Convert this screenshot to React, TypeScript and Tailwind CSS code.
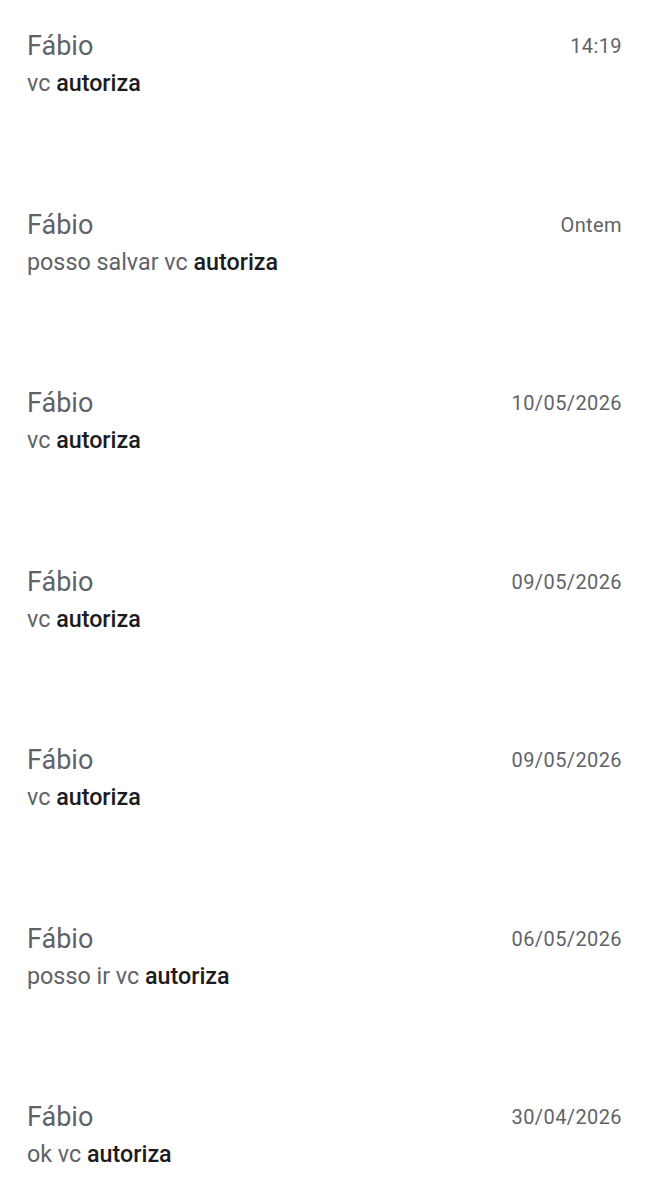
const rows = [
  { date: "14:19", pre: "vc", bold: "autoriza" },
  { date: "Ontem", pre: "posso salvar vc", bold: "autoriza" },
  { date: "10/05/2026", pre: "vc", bold: "autoriza" },
  { date: "09/05/2026", pre: "vc", bold: "autoriza" },
  { date: "09/05/2026", pre: "vc", bold: "autoriza" },
  { date: "06/05/2026", pre: "posso ir vc", bold: "autoriza" },
  { date: "30/04/2026", pre: "ok vc", bold: "autoriza" },
]

export default function App(): React.ReactElement {
  return (
    <div className="w-[649px] h-[1200px] bg-white overflow-hidden font-['Roboto',sans-serif]">
      <div className="pt-[29px] px-[27px]">
        {rows.map((r, i) => (
          <div key={i} className="h-[178.5px]">
            <div className="flex justify-between items-start">
              <div className="text-[27px] leading-[34px] text-[#5f6368]">Fábio</div>
              <div className="text-[20px] leading-[34px] text-[#5f6368] tracking-[0.4px]">{r.date}</div>
            </div>
            <div className="text-[23.3px] leading-[30px] text-[#5f6368] mt-[5px]">
              {r.pre} <span className="font-medium text-[#1c1c1e]">{r.bold}</span>
            </div>
          </div>
        ))}
      </div>
    </div>
  )
}
